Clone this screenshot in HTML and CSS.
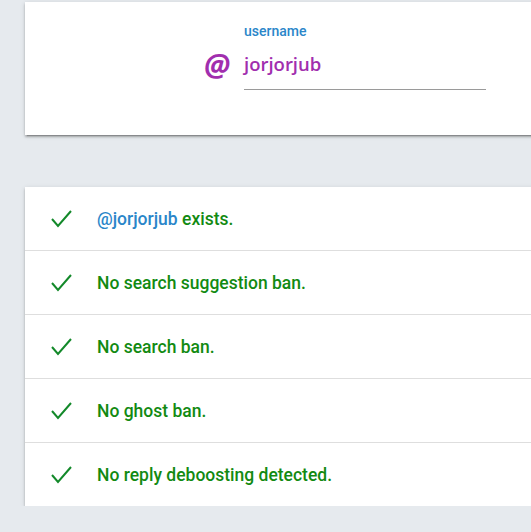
FILE: index.html
```html
<!DOCTYPE html>
<html>
<head>
<meta charset="utf-8">
<link rel="stylesheet" href="styles.css">
</head>
<body>
<div class="page">
  <section class="card form-card">
    <div class="field">
      <span class="at">@</span>
      <div class="input-wrap">
        <label class="label">username</label>
        <div class="input">jorjorjub</div>
      </div>
    </div>
  </section>
  <section class="card results">
    <div class="row">
      <svg class="check" width="24" height="24" viewBox="0 0 24 24"><polyline points="3,12 9,19 22,4" /></svg>
      <span class="msg"><span class="user">@jorjorjub</span> exists.</span>
    </div>
    <div class="row">
      <svg class="check" width="24" height="24" viewBox="0 0 24 24"><polyline points="3,12 9,19 22,4" /></svg>
      <span class="msg">No search suggestion ban.</span>
    </div>
    <div class="row">
      <svg class="check" width="24" height="24" viewBox="0 0 24 24"><polyline points="3,12 9,19 22,4" /></svg>
      <span class="msg">No search ban.</span>
    </div>
    <div class="row">
      <svg class="check" width="24" height="24" viewBox="0 0 24 24"><polyline points="3,12 9,19 22,4" /></svg>
      <span class="msg">No ghost ban.</span>
    </div>
    <div class="row">
      <svg class="check" width="24" height="24" viewBox="0 0 24 24"><polyline points="3,12 9,19 22,4" /></svg>
      <span class="msg">No reply deboosting detected.</span>
    </div>
  </section>
</div>
</body>
</html>
```
FILE: styles.css
```css
html, body {
  margin: 0;
  padding: 0;
  background: #e6eaee;
  overflow: hidden;
  font-family: Roboto, "Liberation Sans", sans-serif;
}
.page {
  padding: 2px 0 0 25px;
  width: 530px;
}
.card {
  background: #fff;
  box-shadow: 0 2px 2px rgba(0,0,0,0.22), 0 3px 1px -2px rgba(0,0,0,0.2), 0 1px 5px rgba(0,0,0,0.12);
}
.form-card {
  height: 133px;
  box-sizing: border-box;
  padding-top: 21px;
}
.field {
  display: flex;
  align-items: flex-start;
  padding-left: 179px;
}
.at {
  color: #a12eae;
  font-size: 30px;
  font-weight: 700;
  font-style: italic;
  width: 40px;
  margin-top: 25px;
  line-height: 34px;
  font-family: "Open Sans", Roboto, sans-serif;
}
.input-wrap {
  width: 242px;
}
.label {
  display: block;
  color: #2a86c9;
  font-size: 14px;
  font-weight: 500;
  line-height: 16px;
}
.input {
  color: #a12eae;
  font-size: 18.5px;
  font-weight: 600;
  line-height: 26px;
  padding: 12px 0 12px;
  border-bottom: 1px solid #9a9a9a;
  font-family: "Open Sans", Roboto, sans-serif;
}
.results {
  margin-top: 52px;
}
.row {
  display: flex;
  align-items: center;
  height: 63px;
  border-bottom: 1px solid #dedede;
  padding-left: 24px;
}
.row:last-child {
  border-bottom: none;
}
.check {
  width: 24px;
  height: 24px;
  margin-right: 24px;
}
.check polyline {
  fill: none;
  stroke: #13892a;
  stroke-width: 2;
}
.msg {
  color: #128a12;
  font-size: 17.5px;
  font-weight: 500;
}
.user {
  color: #2a86c9;
}
```
